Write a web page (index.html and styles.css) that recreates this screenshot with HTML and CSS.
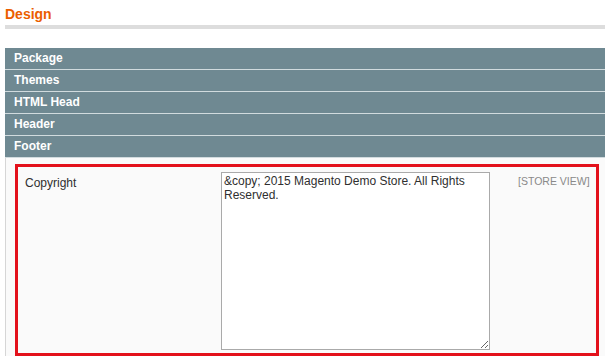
FILE: index.html
```html
<!DOCTYPE html>
<html lang="en">
<head>
    <meta charset="UTF-8">
    <title>Design</title>
    <link rel="stylesheet" href="styles.css">
</head>
<body>
    <div class="page">
        <h3 class="page-title">Design</h3>

        <div class="section">
            <div class="section-head">Package</div>
            <div class="section-head">Themes</div>
            <div class="section-head">HTML Head</div>
            <div class="section-head">Header</div>
            <div class="section-head">Footer</div>

            <div class="section-body">
                <div class="highlight">
                    <div class="row">
                        <label class="row-label" for="copyright">Copyright</label>
                        <textarea id="copyright" class="row-value">&amp;copy; 2015 Magento Demo Store. All Rights Reserved.</textarea>
                        <span class="row-scope">[STORE VIEW]</span>
                    </div>
                </div>
            </div>
        </div>
    </div>
</body>
</html>
```

FILE: styles.css
```css
body {
    margin: 0;
    background-color: #fff;
    font-family: "Liberation Sans", Arial, sans-serif;
    font-size: 12px;
    color: #2f2f2f;
}
.page {
    padding: 0 0 0 5px;
}
.page-title {
    margin: 0;
    padding: 6px 0 0 0;
    height: 19px;
    font-size: 14px;
    font-weight: bold;
    color: #eb5e00;
    border-bottom: 4px solid #dddddd;
}
.section {
    margin-top: 19px;
}
.section-head {
    height: 21px;
    line-height: 21px;
    padding-left: 9px;
    background-color: #6f8992;
    border-bottom: 1px solid #d1dbde;
    color: #fff;
    font-weight: bold;
    font-size: 12px;
}
.section-body {
    background-color: #fafafa;
    border-left: 1px solid #d6d6d6;
    padding: 6px 6px 0 9px;
    height: 200px;
    box-sizing: border-box;
}
.highlight {
    border: 3px solid #e3111b;
    height: 192px;
    box-sizing: border-box;
}
.row {
    display: flex;
    padding: 5px 0 0 7px;
}
.row-label {
    width: 196px;
    padding-top: 4px;
    color: #2f2f2f;
}
.row-value {
    width: 269px;
    height: 178px;
    box-sizing: border-box;
    margin: 0;
    padding: 1px 2px;
    border: 1px solid #aaa;
    background-color: #fff;
    font-family: "Liberation Sans", Arial, sans-serif;
    font-size: 12px;
    color: #2f2f2f;
    resize: both;
}
.row-scope {
    margin-left: 28px;
    padding-top: 3px;
    font-size: 10.5px;
    color: #898989;
}
```
